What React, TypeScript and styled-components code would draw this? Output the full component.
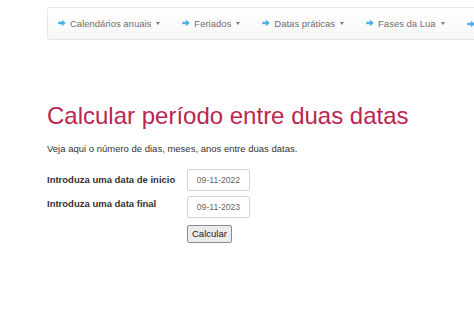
import React from "react";
import styled, { createGlobalStyle } from "styled-components";

const Global = createGlobalStyle`
  html, body { margin: 0; padding: 0; background: #ffffff; }
  body {
    font-family: "Liberation Sans", Arial, sans-serif;
    font-size: 9.5px;
    line-height: 1.43;
    color: #333333;
  }
`;

const Page = styled.div`
  padding: 7px 0 0 47px;
  overflow: hidden;
`;

const Navbar = styled.nav`
  display: flex;
  align-items: center;
  height: 31px;
  width: 460px;
  border: 1px solid #e6e6e6;
  border-radius: 3px;
  background: linear-gradient(#ffffff, #f7f7f7);
`;

const NavItem = styled.a`
  display: flex;
  align-items: center;
  padding: 0 11px;
  color: #6f6f6f;
  font-size: 9.5px;
  white-space: nowrap;
  text-decoration: none;
  &:first-child { padding-left: 10px; }
`;

const ArrowIcon = styled.svg`
  width: 8px;
  height: 8px;
  margin-right: 4px;
  flex: none;
`;

const Caret = styled.span`
  display: inline-block;
  width: 0;
  height: 0;
  margin-left: 5px;
  border-top: 3px solid #7a7a7a;
  border-left: 2.5px solid transparent;
  border-right: 2.5px solid transparent;
`;

const Title = styled.h1`
  margin: 63px 0 0;
  font-family: "Liberation Sans", Arial, sans-serif;
  font-weight: 400;
  font-size: 24px;
  line-height: 1.1;
  color: #bb2650;
`;

const Lead = styled.p`
  margin: 13px 0 0;
  font-size: 9.5px;
  line-height: 13.6px;
`;

const Form = styled.div`
  margin-top: 13px;
  display: grid;
  grid-template-columns: 140px auto;
  row-gap: 5px;
  justify-content: start;
`;

const Label = styled.label<{ $align: "center" | "start" }>`
  font-weight: 700;
  font-size: 9.5px;
  line-height: 13.6px;
  align-self: ${(p) => p.$align};
  margin-top: ${(p) => (p.$align === "start" ? "1px" : "0")};
`;

const DateInput = styled.input`
  box-sizing: border-box;
  width: 63px;
  height: 22px;
  margin: 0;
  padding: 0;
  border: 1px solid #d4d4d4;
  border-radius: 2px;
  background: #ffffff;
  color: #666666;
  font-family: "Liberation Sans", Arial, sans-serif;
  font-size: 8.6px;
  text-align: center;
  outline: none;
`;

const Spacer = styled.div``;

const SubmitButton = styled.button`
  justify-self: start;
  box-sizing: border-box;
  height: 18px;
  margin-top: 2px;
  padding: 0 4px;
  border: 1px solid #8d8d8d;
  border-radius: 2px;
  background: #ebebeb;
  color: #222222;
  font-family: "Liberation Sans", Arial, sans-serif;
  font-size: 9.5px;
  line-height: 16px;
`;

const Arrow = () => (
  <ArrowIcon viewBox="0 0 14 14">
    <path d="M0.5 4.8h6.6V1.2L13.5 7l-6.4 5.8V9.2H0.5z" fill="#4aaee6" />
  </ArrowIcon>
);

const menu = ["Calendários anuais", "Feriados", "Datas práticas", "Fases da Lua"];

export default function App() {
  return (
    <>
      <Global />
      <Page>
        <Navbar>
          {menu.map((m) => (
            <NavItem key={m}>
              <Arrow />
              {m}
              <Caret />
            </NavItem>
          ))}
          <NavItem>
            <Arrow />
          </NavItem>
        </Navbar>
        <Title>Calcular período entre duas datas</Title>
        <Lead>Veja aqui o número de dias, meses, anos entre duas datas.</Lead>
        <Form>
          <Label $align="center">Introduza uma data de inicio</Label>
          <DateInput defaultValue="09-11-2022" />
          <Label $align="start">Introduza uma data final</Label>
          <DateInput defaultValue="09-11-2023" />
          <Spacer />
          <SubmitButton>Calcular</SubmitButton>
        </Form>
      </Page>
    </>
  );
}
